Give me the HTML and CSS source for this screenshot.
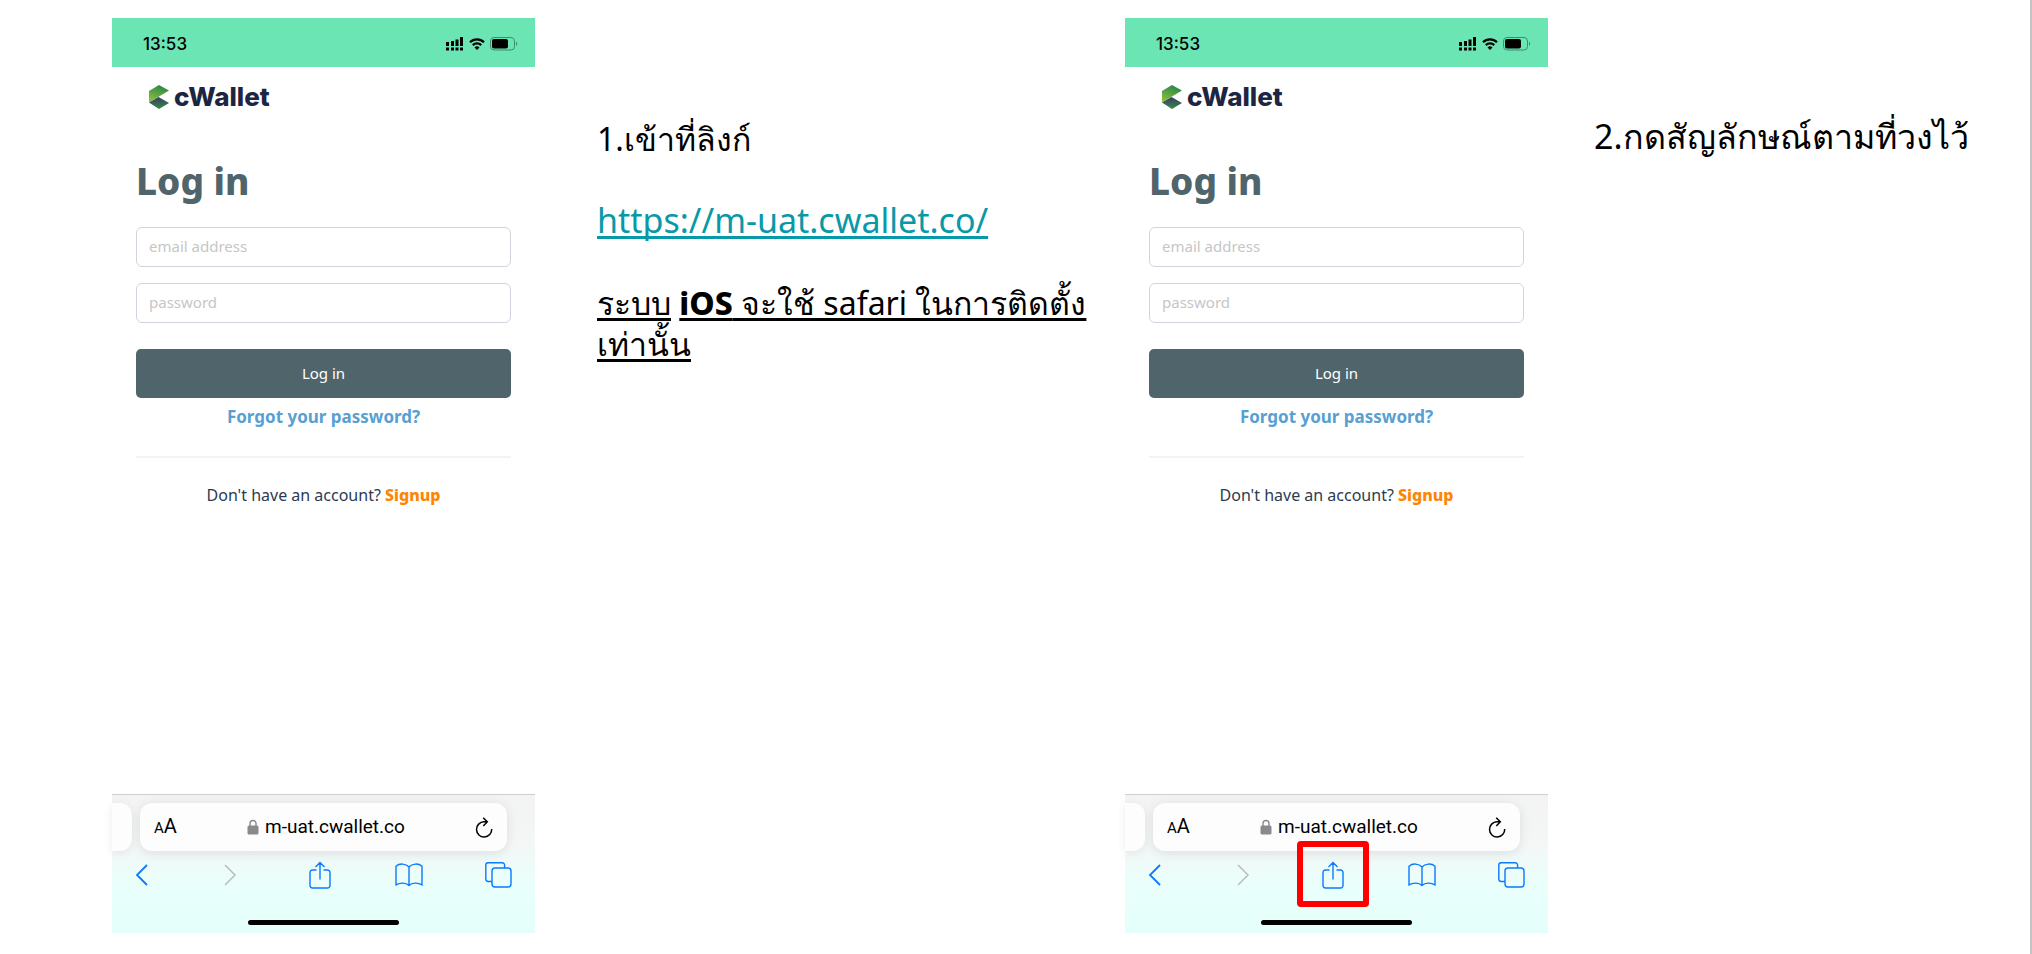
FILE: index.html
```html
<!DOCTYPE html>
<html lang="th">
<head>
<meta charset="utf-8">
<title>cWallet iOS</title>
<link rel="stylesheet" href="styles.css">
</head>
<body>
<svg class="defs" width="0" height="0" aria-hidden="true">
  <defs>
    <linearGradient id="leaf-top" x1="0" y1="1" x2="0.4" y2="0"><stop offset="0" stop-color="#9cc53b"/><stop offset="1" stop-color="#2f8a48"/></linearGradient>
    <linearGradient id="leaf-bottom" x1="0" y1="0" x2="0" y2="1"><stop offset="0" stop-color="#3a3c63"/><stop offset="1" stop-color="#348a49"/></linearGradient>
    <symbol id="logo" viewBox="0 0 20 24"><path d="M0 6 10 0l10 5.500L0 17.500Z" fill="url(#leaf-top)"/><path d="M0 17.500 9.500 12 20 18l-10 6Z" fill="url(#leaf-bottom)"/></symbol>
    <symbol id="signal" viewBox="0 0 18 14"><path d="M0 5h3v4H0zM5 4h3v5H5zM9.500 2.500h3V9h-3zM14 0h3v9h-3zM0 10.500h3v3H0zM5 10.500h3v3H5zM9.500 10.500h3v3h-3zM14 10.500h3v3h-3z"/></symbol>
    <symbol id="wifi" viewBox="0 0 16 12"><path d="M1 4.200a10 10 0 0 1 14 0M3.800 7.100a6 6 0 0 1 8.400 0" fill="none" stroke="currentColor" stroke-width="2.200"/><path d="M8 12 5.500 9.500a3.600 3.600 0 0 1 5 0Z"/></symbol>
    <symbol id="battery" viewBox="0 0 28 14"><rect x=".5" y=".5" width="24" height="12.500" rx="3.500" fill="none" stroke="#3f8d70"/><rect x="2" y="2" width="16" height="9.500" rx="2"/><path d="M26 4.500c1.600.8 1.600 3.700 0 4.500z" fill="#3f8d70"/></symbol>
    <symbol id="lock" viewBox="0 0 12 16"><rect x=".5" y="6.500" width="11" height="9" rx="1.500"/><path d="M3 7V4.500a3 3 0 0 1 6 0V7" fill="none" stroke="currentColor" stroke-width="1.400"/></symbol>
    <symbol id="reload" viewBox="0 0 18 21"><path d="M12 4.800H9A7.600 7.600 0 1 0 16.700 12M8.200 .700l4.100 4.100L8.300 9" fill="none" stroke="currentColor" stroke-width="1.500"/></symbol>
    <symbol id="back" viewBox="0 0 13 22"><path d="M12 1 2 11l10 10" fill="none" stroke="currentColor" stroke-width="1.800"/></symbol>
    <symbol id="forward" viewBox="0 0 13 22"><path d="m1 1 10 10L1 21" fill="none" stroke="currentColor" stroke-width="1.500"/></symbol>
    <symbol id="share" viewBox="0 0 22 28"><path d="M7.500 9H3.500A2.500 2.500 0 0 0 1 11.500v13A2.500 2.500 0 0 0 3.500 27h15a2.500 2.500 0 0 0 2.500-2.500v-13A2.500 2.500 0 0 0 18.500 9h-4M11 18.500V1.500M6.500 6 11 1.500 15.500 6" fill="none" stroke="currentColor" stroke-width="1.400"/></symbol>
    <symbol id="book" viewBox="0 0 28 24"><path d="M14 4v19M14 4C11 .5 4.500 0 1 3.200v18.600c4-2.300 10-2.300 13 .7 3-3 9-3 13-.7V3.200C23.500 0 17 .5 14 4Z" fill="none" stroke="currentColor" stroke-width="1.400"/></symbol>
    <symbol id="tabs" viewBox="0 0 27 26"><path d="M7 19.500H3.200A2.400 2.400 0 0 1 .8 17.100V3.200A2.400 2.400 0 0 1 3.200.8h14A2.400 2.400 0 0 1 19.600 3.200V6" fill="none" stroke="currentColor" stroke-width="1.400"/><rect x="7" y="6" width="19" height="19" rx="3" fill="none" stroke="currentColor" stroke-width="1.400"/></symbol>
  </defs>
</svg>
<main class="guide">
  <section class="phone">
    <header class="status"><time>13:53</time><span class="status-icons"><svg width="18" height="14"><use href="#signal"/></svg><svg width="16" height="12"><use href="#wifi"/></svg><svg width="28" height="14"><use href="#battery"/></svg></span></header>
    <div class="app">
      <div class="brand"><svg width="20" height="24"><use href="#logo"/></svg><span>cWallet</span></div>
      <h1 class="title">Log in</h1>
      <form class="login">
        <input class="field" type="email" placeholder="email address" aria-label="email address">
        <input class="field" type="password" placeholder="password" aria-label="password">
        <button class="submit" type="button">Log in</button>
      </form>
      <a class="forgot" href="#">Forgot your password?</a>
      <p class="join">Don't have an account? <a class="signup" href="#">Signup</a></p>
    </div>
    <footer class="browser">
      <div class="address-row"><span class="tab-edge"></span><div class="address"><button class="plain reader" type="button"><small>A</small>A</button><span class="host"><svg width="12" height="16"><use href="#lock"/></svg>m-uat.cwallet.co</span><button class="plain" type="button" aria-label="Reload"><svg width="18" height="21"><use href="#reload"/></svg></button></div></div>
      <nav class="tools">
        <button class="plain" type="button" aria-label="Back"><svg width="13" height="22"><use href="#back"/></svg></button>
        <button class="plain muted" type="button" aria-label="Forward"><svg width="13" height="22"><use href="#forward"/></svg></button>
        <button class="plain share" type="button" aria-label="Share"><svg width="22" height="28"><use href="#share"/></svg></button>
        <button class="plain" type="button" aria-label="Bookmarks"><svg width="28" height="24"><use href="#book"/></svg></button>
        <button class="plain" type="button" aria-label="Tabs"><svg width="27" height="26"><use href="#tabs"/></svg></button>
      </nav>
      <div class="home"></div>
    </footer>
  </section>
  <section class="note">
    <p class="thai">1.เข้าที่ลิงก์</p>
    <p><a class="link" href="https://m-uat.cwallet.co/">https://m-uat.cwallet.co/</a></p>
    <p class="thai"><u>ระบบ</u> <u><b>iOS</b> จะใช้ safari ในการติดตั้ง<br>เท่านั้น</u></p>
  </section>
  <section class="phone">
    <header class="status"><time>13:53</time><span class="status-icons"><svg width="18" height="14"><use href="#signal"/></svg><svg width="16" height="12"><use href="#wifi"/></svg><svg width="28" height="14"><use href="#battery"/></svg></span></header>
    <div class="app">
      <div class="brand"><svg width="20" height="24"><use href="#logo"/></svg><span>cWallet</span></div>
      <h1 class="title">Log in</h1>
      <form class="login">
        <input class="field" type="email" placeholder="email address" aria-label="email address">
        <input class="field" type="password" placeholder="password" aria-label="password">
        <button class="submit" type="button">Log in</button>
      </form>
      <a class="forgot" href="#">Forgot your password?</a>
      <p class="join">Don't have an account? <a class="signup" href="#">Signup</a></p>
    </div>
    <footer class="browser">
      <div class="address-row"><span class="tab-edge"></span><div class="address"><button class="plain reader" type="button"><small>A</small>A</button><span class="host"><svg width="12" height="16"><use href="#lock"/></svg>m-uat.cwallet.co</span><button class="plain" type="button" aria-label="Reload"><svg width="18" height="21"><use href="#reload"/></svg></button></div></div>
      <nav class="tools">
        <button class="plain" type="button" aria-label="Back"><svg width="13" height="22"><use href="#back"/></svg></button>
        <button class="plain muted" type="button" aria-label="Forward"><svg width="13" height="22"><use href="#forward"/></svg></button>
        <button class="plain share marked" type="button" aria-label="Share"><svg width="22" height="28"><use href="#share"/></svg></button>
        <button class="plain" type="button" aria-label="Bookmarks"><svg width="28" height="24"><use href="#book"/></svg></button>
        <button class="plain" type="button" aria-label="Tabs"><svg width="27" height="26"><use href="#tabs"/></svg></button>
      </nav>
      <div class="home"></div>
    </footer>
  </section>
  <section class="note note-last"><p>2.กดสัญลักษณ์ตามที่วงไว้</p></section>
</main>
</body>
</html>
```
FILE: styles.css
```css
* { box-sizing: border-box; }
body { margin: 0; background: #fff; color: #000; font-family: "Noto Sans", sans-serif; }
p, h1 { margin: 0; }
a { text-decoration: none; }
svg { display: block; flex: none; fill: currentColor; }
.defs { position: absolute; }

.guide {
  display: grid;
  grid-template-columns: minmax(0, 423fr) minmax(0, 590fr) minmax(0, 423fr) minmax(0, 482fr);
  min-height: 100vh;
  padding: 18px 0 21px 112px;
  border-right: 2px solid #c4c4c4;
}

.phone { display: flex; flex-direction: column; min-width: 0; }
.status {
  display: flex; align-items: center; justify-content: space-between;
  height: 49px; padding: 2px 17px 0 31px; background: #6be5b4;
  font: 500 17px/20px Inter, sans-serif;
}
.status-icons { display: flex; align-items: center; gap: 5px; }

.app { flex: 1; padding: 17px 24px 0; }
.brand { display: flex; align-items: center; gap: 5px; padding-left: 13px; color: #1c2542; font: 800 26px/26px Inter, sans-serif; }
.title { margin-top: 47px; color: #50656b; font: 800 37px/48px "Noto Sans", sans-serif; }
.login { display: grid; gap: 16px; margin-top: 22px; }
.field {
  width: 100%; height: 40px; padding: 0 12px 2px; border: 1px solid #d0d4dc; border-radius: 6px;
  background: #fff; font: 400 15px/20px "Noto Sans", sans-serif; color: #333;
}
.field::placeholder { color: #c6c6c6; opacity: 1; }
.submit {
  height: 49px; margin-top: 10px; padding: 0 0 2px; border: 0; border-radius: 5px;
  background: #50656b; color: #fff; font: 400 15px/20px "Noto Sans", sans-serif;
}
.forgot {
  display: block; padding: 8px 0 28px; border-bottom: 2px solid #f3f3f4;
  color: #589fd2; font: 700 17px/22px "Noto Sans", sans-serif; text-align: center;
}
.join { padding-top: 26px; color: #2b3b50; font-size: 16px; line-height: 22px; text-align: center; }
.signup { color: #ff8400; font-weight: 800; }

.browser { border-top: 1px solid #cfcfd1; background: linear-gradient(#f3f3f4, #f3f7f6 35%, #eafffb 65%, #e4fffb); }
.address-row { display: flex; gap: 8px; padding: 8px 28px 0 0; }
.tab-edge { width: 20px; background: #fdfdfd; border-radius: 0 12px 12px 0; box-shadow: 0 2px 10px #00000014; }
.address {
  flex: 1; display: flex; align-items: center; justify-content: space-between;
  height: 48px; padding: 0 14px; border-radius: 12px; background: #fdfdfd; box-shadow: 0 2px 12px #0000001a;
}
.plain { position: relative; display: block; padding: 0; border: 0; background: none; color: #0a7aff; }
.address .plain { color: #000; }
.reader { font: 400 20px/24px Roboto, sans-serif; }
.reader small { font-size: 15px; }
.host { display: flex; align-items: center; gap: 6px; font: 400 19px/24px Roboto, sans-serif; }
.host svg { color: #8a8a8e; }
.tools { display: flex; align-items: center; justify-content: space-between; height: 48px; padding: 0 23px 0 15px; }
.tools .plain { display: flex; justify-content: center; width: 28px; }
.plain.muted { color: #babebe; }
.marked::after { content: ""; position: absolute; inset: -20px -22px -18px; border: 6px solid #f00; border-radius: 4px; }
.home { width: 151px; height: 5px; margin: 21px auto 8px; border-radius: 3px; background: #000; }

.note { padding: 100px 20px 0 62px; font: 400 34px/41px "Noto Sans", sans-serif; white-space: nowrap; }
.note p + p { margin-top: 41px; }
.note .thai { font-size: 32px; }
.note-last { padding-top: 98px; padding-left: 46px; }
.note b { font-weight: 800; }
.note u, .link { text-decoration: underline; text-decoration-thickness: 3px; text-underline-offset: 3px; text-decoration-skip-ink: none; }
.link { color: #0899a8; }
```
